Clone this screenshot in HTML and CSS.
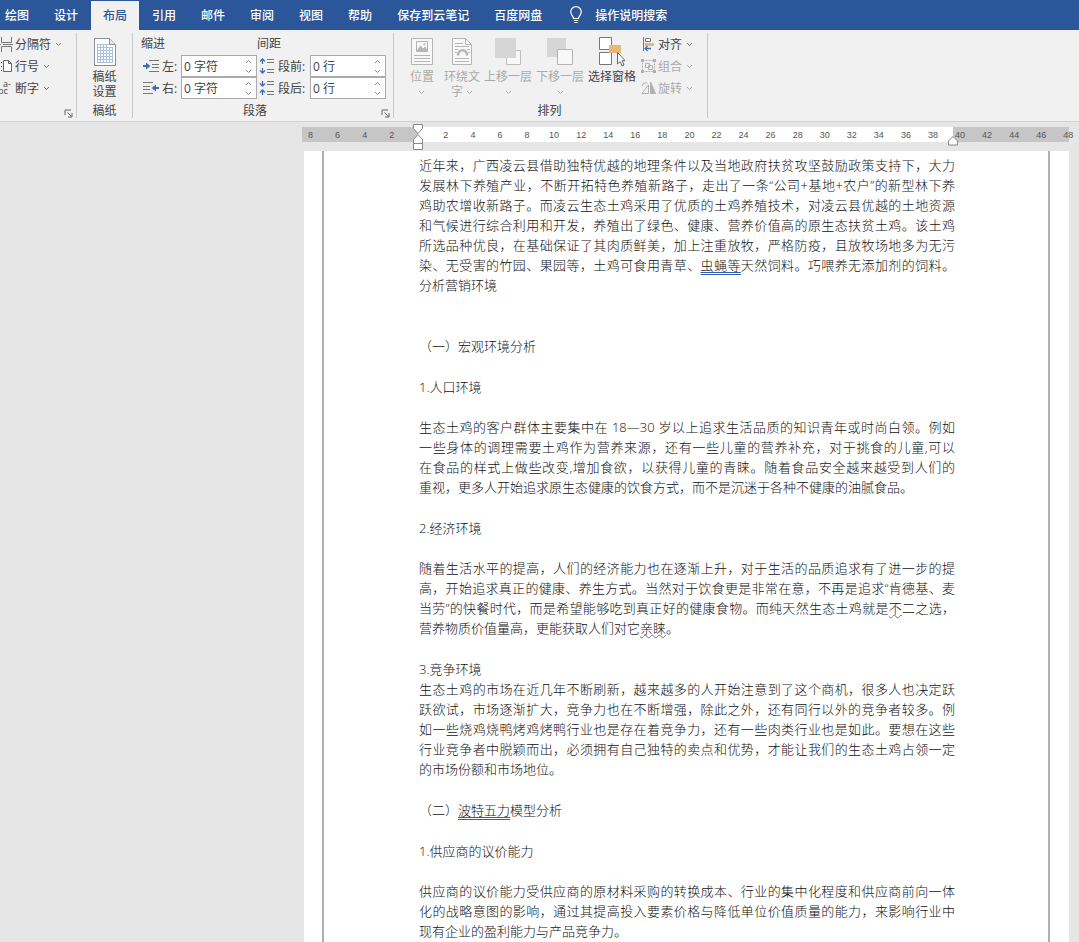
FILE: index.html
```html
<!DOCTYPE html>
<html lang="zh-CN">
<head>
    <meta charset="UTF-8">
    <meta name="viewport" content="width=device-width, initial-scale=1.0">
    <title>文档 - 布局</title>
    <link rel="stylesheet" href="styles.css">
</head>
<body>
    <svg class="defs" width="0" height="0" aria-hidden="true">
        <symbol id="down" viewBox="0 0 7 5"><path d="M1 1l2.500 2.500L6 1" fill="none" stroke="currentColor"/></symbol>
        <symbol id="up" viewBox="0 0 7 5"><path d="M1 4l2.500-2.500L6 4" fill="none" stroke="currentColor"/></symbol>
        <symbol id="launch" viewBox="0 0 9 9"><path d="M1 6V1h6M3.500 3.500l4 4M8 4v4H4" fill="none" stroke="#666"/></symbol>
    </svg>

    <!-- 选项卡 -->
    <nav class="tabs">
        <button class="tab">绘图</button>
        <button class="tab">设计</button>
        <button class="tab active">布局</button>
        <button class="tab">引用</button>
        <button class="tab">邮件</button>
        <button class="tab">审阅</button>
        <button class="tab">视图</button>
        <button class="tab">帮助</button>
        <button class="tab">保存到云笔记</button>
        <button class="tab">百度网盘</button>
        <button class="tab search">
            <svg width="14" height="18" viewBox="0 0 14 18" fill="none" stroke="#fff" stroke-width="1.200">
                <path d="M4.500 12.500C4.500 10 1.700 9 1.700 6a5.300 5.300 0 0 1 10.600 0c0 3-2.800 4-2.800 6.500zM4.800 14.500h4.400M5.300 16.500h3.400"/>
            </svg>
            操作说明搜索
        </button>
    </nav>

    <!-- 功能区 -->
    <div class="ribbon">
        <section class="group group-page">
            <button class="cmd">
                <svg width="13" height="16" viewBox="0 0 13 16" fill="none" stroke="#777"><path d="M1.500 1v5.500h10V1M0 8.500h1M3 8.500h10M1.500 16v-5.500h10V16"/></svg>
                分隔符<svg class="arrow"><use href="#down"/></svg>
            </button>
            <button class="cmd">
                <svg width="13" height="16" viewBox="0 0 13 16" fill="none" stroke="#666"><path d="M3.500 2.500h5l3 3v8h-8zM8.500 2.500v3h3" fill="#fff"/><path d="M1.500 4v1M1.500 8v1M1.500 12v1" stroke="#2b579a"/></svg>
                行号<svg class="arrow"><use href="#down"/></svg>
            </button>
            <button class="cmd">
                <svg class="hyphen" width="13" height="16" viewBox="0 0 13 16"><text x="3" y="7">a-</text><text x="-2" y="14">bc</text></svg>
                断字<svg class="arrow"><use href="#down"/></svg>
            </button>
            <button class="launcher" aria-label="页面设置"><svg width="9" height="9"><use href="#launch"/></svg></button>
        </section>

        <section class="group group-paper">
            <button class="big">
                <svg width="24" height="30" viewBox="0 0 24 30" fill="none">
                    <path d="M1.500 1.500h15l6 6v21h-21z" fill="#fff" stroke="#8a8f98"/>
                    <path d="M4 7.500h12M4 10.500h16M4 13.500h16M4 16.500h16M4 19.500h16M4 22.500h16M4 25.500h16M4.500 7v19M7.500 7v19M10.500 7v19M13.500 7v19M16.500 10v16M19.500 10v16" stroke="#a9c1de"/>
                    <path d="M16.500 1.500v6h6" fill="#e4e6ea" stroke="#8a8f98"/>
                </svg>
                <span>稿纸<br>设置</span>
            </button>
            <h4>稿纸</h4>
        </section>

        <section class="group group-para">
            <div class="para-cols">
                <div class="para-col">
                    <div class="col-title">缩进</div>
                    <div class="field">
                        <svg width="16" height="14" viewBox="0 0 16 14" fill="none"><path d="M6 1.500h10M9 5.500h7M9 8.500h7M6 12.500h10" stroke="#777"/><path d="M0 7h4" stroke="#3f6db3" stroke-width="2"/><path d="M3 3.500L7.500 7 3 10.500z" fill="#3f6db3"/></svg>
                        <label for="left">左:</label>
                        <span class="spin"><input id="left" type="text" value="0 字符"><button aria-label="增加"><svg><use href="#up"/></svg></button><button aria-label="减少"><svg><use href="#down"/></svg></button></span>
                    </div>
                    <div class="field">
                        <svg width="16" height="14" viewBox="0 0 16 14" fill="none"><path d="M0 1.500h10M0 5.500h7M0 8.500h7M0 12.500h10" stroke="#777"/><path d="M12 7h4" stroke="#3f6db3" stroke-width="2"/><path d="M13 3.500L8.500 7l4.500 3.500z" fill="#3f6db3"/></svg>
                        <label for="right">右:</label>
                        <span class="spin"><input id="right" type="text" value="0 字符"><button aria-label="增加"><svg><use href="#up"/></svg></button><button aria-label="减少"><svg><use href="#down"/></svg></button></span>
                    </div>
                </div>
                <div class="para-col">
                    <div class="col-title">间距</div>
                    <div class="field">
                        <svg width="16" height="16" viewBox="0 0 16 16" fill="none"><path d="M8 1.500h7M8 4.500h7M8 11.500h7M8 14.500h7" stroke="#777"/><path d="M3.500 1v5M1 3.500L3.500 1 6 3.500M3.500 10v5M1 12.500L3.500 15 6 12.500" stroke="#3f6db3" stroke-width="1.300"/></svg>
                        <label for="before">段前:</label>
                        <span class="spin"><input id="before" type="text" value="0 行"><button aria-label="增加"><svg><use href="#up"/></svg></button><button aria-label="减少"><svg><use href="#down"/></svg></button></span>
                    </div>
                    <div class="field">
                        <svg width="16" height="16" viewBox="0 0 16 16" fill="none"><path d="M8 1.500h7M8 4.500h7M8 11.500h7M8 14.500h7" stroke="#777"/><path d="M3.500 1v5M1 3.500L3.500 6 6 3.500M3.500 10v5M1 12.500L3.500 10 6 12.500" stroke="#3f6db3" stroke-width="1.300"/></svg>
                        <label for="after">段后:</label>
                        <span class="spin"><input id="after" type="text" value="0 行"><button aria-label="增加"><svg><use href="#up"/></svg></button><button aria-label="减少"><svg><use href="#down"/></svg></button></span>
                    </div>
                </div>
            </div>
            <h4>段落</h4>
            <button class="launcher" aria-label="段落设置"><svg width="9" height="9"><use href="#launch"/></svg></button>
        </section>

        <section class="group group-arrange">
            <div class="arrange">
                <button class="big narrow" disabled>
                    <svg width="24" height="30" viewBox="0 0 24 30" fill="none" stroke="#b5b5b5"><path d="M1.500 1.500h21v26h-21z" fill="#f8f8f8"/><path d="M6.500 4.500h11v10h-11z"/><path d="M7 14l3.500-5 2.500 3 2-2 2.500 4z" fill="#b5b5b5"/><circle cx="14.500" cy="7.500" r=".7"/><path d="M4 18.500h16M4 21.500h16M4 24.500h16"/></svg>
                    <span>位置<br><svg class="arrow"><use href="#down"/></svg></span>
                </button>
                <button class="big narrow" disabled>
                    <svg width="24" height="30" viewBox="0 0 24 30" fill="none" stroke="#b5b5b5"><path d="M2.500 1.500h13l6 6v20h-19z" fill="#f8f8f8"/><path d="M15.500 1.500v6h6M5 6.500h8M5 9.500h14M5 12.500h3M17 12.500h3M5 15.500h2M18 15.500h2M5 21.500h14M5 24.500h14"/><path d="M8 18.500c0-7 9-7 9 0" stroke-width="2.500"/></svg>
                    <span>环绕文<br>字 <svg class="arrow"><use href="#down"/></svg></span>
                </button>
                <button class="big" disabled>
                    <svg width="26" height="30" viewBox="0 0 26 30"><path d="M11.500 13.500h14v14h-14z" fill="#f8f8f8" stroke="#bdbdbd"/><path d="M0 1h21v20H0z" fill="#d6d6d6"/></svg>
                    <span>上移一层<br><svg class="arrow"><use href="#down"/></svg></span>
                </button>
                <button class="big" disabled>
                    <svg width="26" height="30" viewBox="0 0 26 30"><path d="M0 1h19v19H0z" fill="#d6d6d6"/><path d="M10.500 12.500h15v15h-15z" fill="#f8f8f8" stroke="#b5b5b5"/></svg>
                    <span>下移一层<br><svg class="arrow"><use href="#down"/></svg></span>
                </button>
                <button class="big">
                    <svg width="26" height="30" viewBox="0 0 26 30"><path d="M.5.5h12v12H.5zM.5 15.500h12v12H.5z" fill="#fff" stroke="#777"/><path d="M10 8h12v8H10z" fill="#e8b878"/><path d="M18.500 15.500v11.500l2.800-2.500 1.700 4.500 2-1-1.800-4.300h3z" fill="#fff" stroke="#666"/></svg>
                    <span>选择窗格</span>
                </button>
                <div class="cmd-col">
                    <button class="cmd">
                        <svg width="15" height="16" viewBox="0 0 15 16" fill="none"><path d="M2.500 1v14" stroke="#777"/><path d="M4.500 2.500h5v3h-5z" fill="#fff" stroke="#777"/><path d="M4 7h9v3H4z" fill="#e8b878"/><path d="M4 12.500h6M6.500 10l-2.500 2.500L6.500 15" stroke="#3f6db3" stroke-width="1.300"/></svg>
                        对齐<svg class="arrow"><use href="#down"/></svg>
                    </button>
                    <button class="cmd" disabled>
                        <svg width="15" height="16" viewBox="0 0 15 16" fill="none" stroke="#b0b0b0"><path d="M1.500 2.500h12v11h-12z" stroke-dasharray="2 1"/><path d="M4.500 5.500h4v4h-4zM7.500 7.500h4v4h-4z"/><path d="M0 1h3v3H0zM12 1h3v3h-3zM0 12h3v3H0zM12 12h3v3h-3z" fill="#b0b0b0" stroke="none"/></svg>
                        组合<svg class="arrow"><use href="#down"/></svg>
                    </button>
                    <button class="cmd" disabled>
                        <svg width="15" height="16" viewBox="0 0 15 16" fill="none" stroke="#b0b0b0"><path d="M7.500 5v8.500H.8zM1.500 6c0-3 3-4 5-2.500"/><path d="M9.500 2v11.500h5z" fill="#b0b0b0"/></svg>
                        旋转<svg class="arrow"><use href="#down"/></svg>
                    </button>
                </div>
            </div>
            <h4>排列</h4>
        </section>
    </div>

    <!-- 标尺和正文 -->
    <main class="workspace">
        <div class="ruler">
            <div class="ticks">
                <span>8</span><span>6</span><span>4</span><span>2</span><span></span>
                <span>2</span><span>4</span><span>6</span><span>8</span><span>10</span>
                <span>12</span><span>14</span><span>16</span><span>18</span><span>20</span>
                <span>22</span><span>24</span><span>26</span><span>28</span><span>30</span>
                <span>32</span><span>34</span><span>36</span><span>38</span><span>40</span>
                <span>42</span><span>44</span><span>46</span><span>48</span>
            </div>
            <svg class="marker marker-left" width="12" height="28" viewBox="0 0 12 28" fill="#fff" stroke="#888"><path d="M1.500 1.500h9v4L6 10.500l-4.500-5zM6 11.500l4.500 5v4h-9v-4zM1.500 20.500h9v6h-9z"/></svg>
            <svg class="marker marker-right" width="12" height="11" viewBox="0 0 12 11" fill="#fff" stroke="#888"><path d="M6 1.500l4.500 4.500v4h-9V6z"/></svg>
        </div>

        <div class="page">
            <article class="paper">
                <p class="lead">近年来，广西凌云县借助独特优越的地理条件以及当地政府扶贫攻坚鼓励政策支持下，大力<br>
                    发展林下养殖产业，不断开拓特色养殖新路子，走出了一条“公司+基地+农户”的新型林下养<br>
                    鸡助农增收新路子。而凌云生态土鸡采用了优质的土鸡养殖技术，对凌云县优越的土地资源<br>
                    和气候进行综合利用和开发，养殖出了绿色、健康、营养价值高的原生态扶贫土鸡。该土鸡<br>
                    所选品种优良，在基础保证了其肉质鲜美，加上注重放牧，严格防疫，且放牧场地多为无污<br>
                    染、无受害的竹园、果园等，土鸡可食用青草、<span class="grammar">虫蝇等</span>天然饲料。巧喂养无添加剂的饲料。
                    <span class="end">分析营销环境</span></p>

                <h2>（一）宏观环境分析</h2>

                <h3>1.人口环境</h3>
                <p>生态土鸡的客户群体主要集中在 18—30 岁以上追求生活品质的知识青年或时尚白领。例如<br>
                    一些身体的调理需要土鸡作为营养来源，还有一些儿童的营养补充，对于挑食的儿童,可以<br>
                    在食品的样式上做些改变,增加食欲，以获得儿童的青睐。随着食品安全越来越受到人们的
                    <span class="end">重视，更多人开始追求原生态健康的饮食方式，而不是沉迷于各种不健康的油腻食品。</span></p>

                <h3>2.经济环境</h3>
                <p>随着生活水平的提高，人们的经济能力也在逐渐上升，对于生活的品质追求有了进一步的提<br>
                    高，开始追求真正的健康、养生方式。当然对于饮食更是非常在意，不再是追求“肯德基、麦<br>
                    当劳”的快餐时代，而是希望能够吃到真正好的健康食物。而纯天然生态土鸡就是<span class="spelling">不</span>二之选，
                    <span class="end">营养物质价值量高，更能获取人们对它<span class="spelling">亲睐</span>。</span></p>

                <h3 class="tight">3.竞争环境</h3>
                <p>生态土鸡的市场在近几年不断刷新，越来越多的人开始注意到了这个商机，很多人也决定跃<br>
                    跃欲试，市场逐渐扩大，竞争力也在不断增强，除此之外，还有同行以外的竞争者较多。例<br>
                    如一些烧鸡烧鸭烤鸡烤鸭行业也是存在着竞争力，还有一些肉类行业也是如此。要想在这些<br>
                    行业竞争者中脱颖而出，必须拥有自己独特的卖点和优势，才能让我们的生态土鸡占领一定
                    <span class="end">的市场份额和市场地位。</span></p>

                <h2>（二）<span class="grammar">波特五力</span>模型分析</h2>

                <h3>1.供应商的议价能力</h3>
                <p>供应商的议价能力受供应商的原材料采购的转换成本、行业的集中化程度和供应商前向一体<br>
                    化的战略意图的影响，通过其提高投入要素价格与降低单位价值质量的能力，来影响行业中
                    <span class="end">现有企业的盈利能力与产品竞争力。</span></p>
            </article>
        </div>
    </main>
</body>
</html>
```

FILE: styles.css
```css
* {
    box-sizing: border-box;
}
body {
    margin: 0;
    min-height: 100vh;
    display: flex;
    flex-direction: column;
    overflow-x: hidden;
    font-family: "Open Sans", "Noto Sans CJK SC", sans-serif;
    font-size: 12px;
    color: #444;
    background-color: #e6e6e6;
}
button {
    padding: 0;
    border: 0;
    background: none;
    font: inherit;
    color: inherit;
    white-space: nowrap;
}
svg {
    display: block;
    flex: none;
}
.defs {
    position: absolute;
}
.arrow {
    width: 7px;
    height: 5px;
    color: #777;
}
button:disabled {
    color: #aaa;
}
button:disabled .arrow {
    color: #aaa;
}

/* 选项卡 */
.tabs {
    display: flex;
    gap: 1px;
    height: 30px;
    padding-top: 1px;
    margin-left: -7px;
    background-color: #2b579a;
}
.tab {
    padding: 0 12px 2px;
    color: #fff;
    font-weight: 500;
}
.tab.active {
    color: #2b579a;
    background-color: #f1f1f1;
}
.search {
    display: flex;
    align-items: center;
    gap: 12px;
    padding-left: 14px;
}

/* 功能区 */
.ribbon {
    display: flex;
    height: 92px;
    padding: 3px 0;
    background-color: #f1f1f1;
    border-bottom: 1px solid #d2d2d2;
}
.group {
    position: relative;
    display: flex;
    flex-direction: column;
    flex: none;
    border-right: 1px solid #c8c8c8;
}
.group h4 {
    margin: auto 0 0;
    font-size: 12px;
    font-weight: normal;
    line-height: 14px;
    text-align: center;
}
.group-page {
    width: 77px;
}
.group-paper {
    width: 56px;
}
.group-para {
    width: 261px;
    padding-left: 8px;
}
.group-para h4 {
    padding-right: 24px;
}
.group-arrange {
    width: 314px;
    padding-left: 10px;
}
.group-arrange h4 {
    padding-right: 12px;
}
.launcher {
    position: absolute;
    right: 3px;
    bottom: 0;
}
.cmd {
    display: flex;
    align-items: center;
    gap: 2px;
    height: 22px;
}
.cmd .arrow {
    margin-left: 2px;
}
.hyphen {
    font-size: 9px;
    fill: #444;
}
.big {
    display: flex;
    flex-direction: column;
    align-items: center;
    gap: 2px;
    padding-top: 4px;
    line-height: 15px;
    min-width: 48px;
}
.narrow {
    min-width: 36px;
}
.big span .arrow {
    display: inline-block;
    vertical-align: middle;
}
.arrange {
    display: flex;
    align-items: flex-start;
    gap: 4px;
    height: 66px;
}
.cmd-col {
    padding-left: 1px;
}
.para-cols {
    display: flex;
}
.para-col:first-child {
    width: 116px;
}
.para-col:last-child {
    width: 129px;
}
.col-title {
    height: 22px;
    line-height: 22px;
}
.field {
    display: flex;
    align-items: center;
    gap: 3px;
    height: 22px;
    padding-left: 2px;
}
.spin {
    display: grid;
    grid-template-columns: 1fr 16px;
    grid-template-rows: 10px 10px;
    width: 76px;
    height: 22px;
    margin-left: auto;
    border: 1px solid #ababab;
    background-color: #fff;
}
.spin input {
    grid-row: 1 / 3;
    width: 100%;
    min-width: 0;
    padding: 0 2px;
    border: 0;
    background: none;
    font: inherit;
    color: inherit;
}
.spin button {
    display: flex;
    align-items: center;
    justify-content: center;
    color: #888;
}
.spin svg {
    width: 7px;
    height: 5px;
}

/* 标尺 */
.workspace {
    flex: 1;
    display: flex;
    flex-direction: column;
    padding: 5px 10px 0 302px;
}
.ruler {
    position: relative;
    height: 15px;
    margin-bottom: 9px;
    background: linear-gradient(to right, #c6c6c6 116px, #fff 116px, #fff calc(100% - 116px), #c6c6c6 calc(100% - 116px));
}
.ticks {
    display: flex;
    margin: 0 -13px 0 -5px;
    font-family: "Liberation Sans", sans-serif;
    font-size: 9px;
    line-height: 16px;
    color: #555;
}
.ticks span {
    flex: 1 1 0;
    text-align: center;
}
.marker {
    position: absolute;
}
.marker-left {
    left: 110px;
    top: -4px;
}
.marker-right {
    right: 110px;
    top: 8px;
}

/* 正文 */
.page {
    flex: 1;
    display: flex;
    margin-left: 2px;
    padding: 0 19px 0 18px;
    background-color: #fff;
}
.paper {
    flex: 1;
    padding: 4px 93px 0 95px;
    border: solid #b0b0b0;
    border-width: 0 2px;
    font-size: 13px;
    font-weight: 300;
    line-height: 20px;
    color: #111;
    white-space: nowrap;
}
.paper p {
    margin: 0;
    text-align: justify;
    text-align-last: justify;
}
.paper .lead {
    margin-bottom: 41px;
}
.end {
    display: block;
    text-align-last: left;
}
.paper h2,
.paper h3 {
    margin: 21px 0;
    font-size: inherit;
    font-weight: inherit;
}
.paper h3 {
    margin-bottom: 20px;
}
.paper .tight {
    margin-bottom: 0;
}
.grammar {
    text-decoration: underline double #2f5fb0 1px;
    text-underline-offset: 2px;
}
.spelling {
    text-decoration: underline wavy #777 1px;
}
```
